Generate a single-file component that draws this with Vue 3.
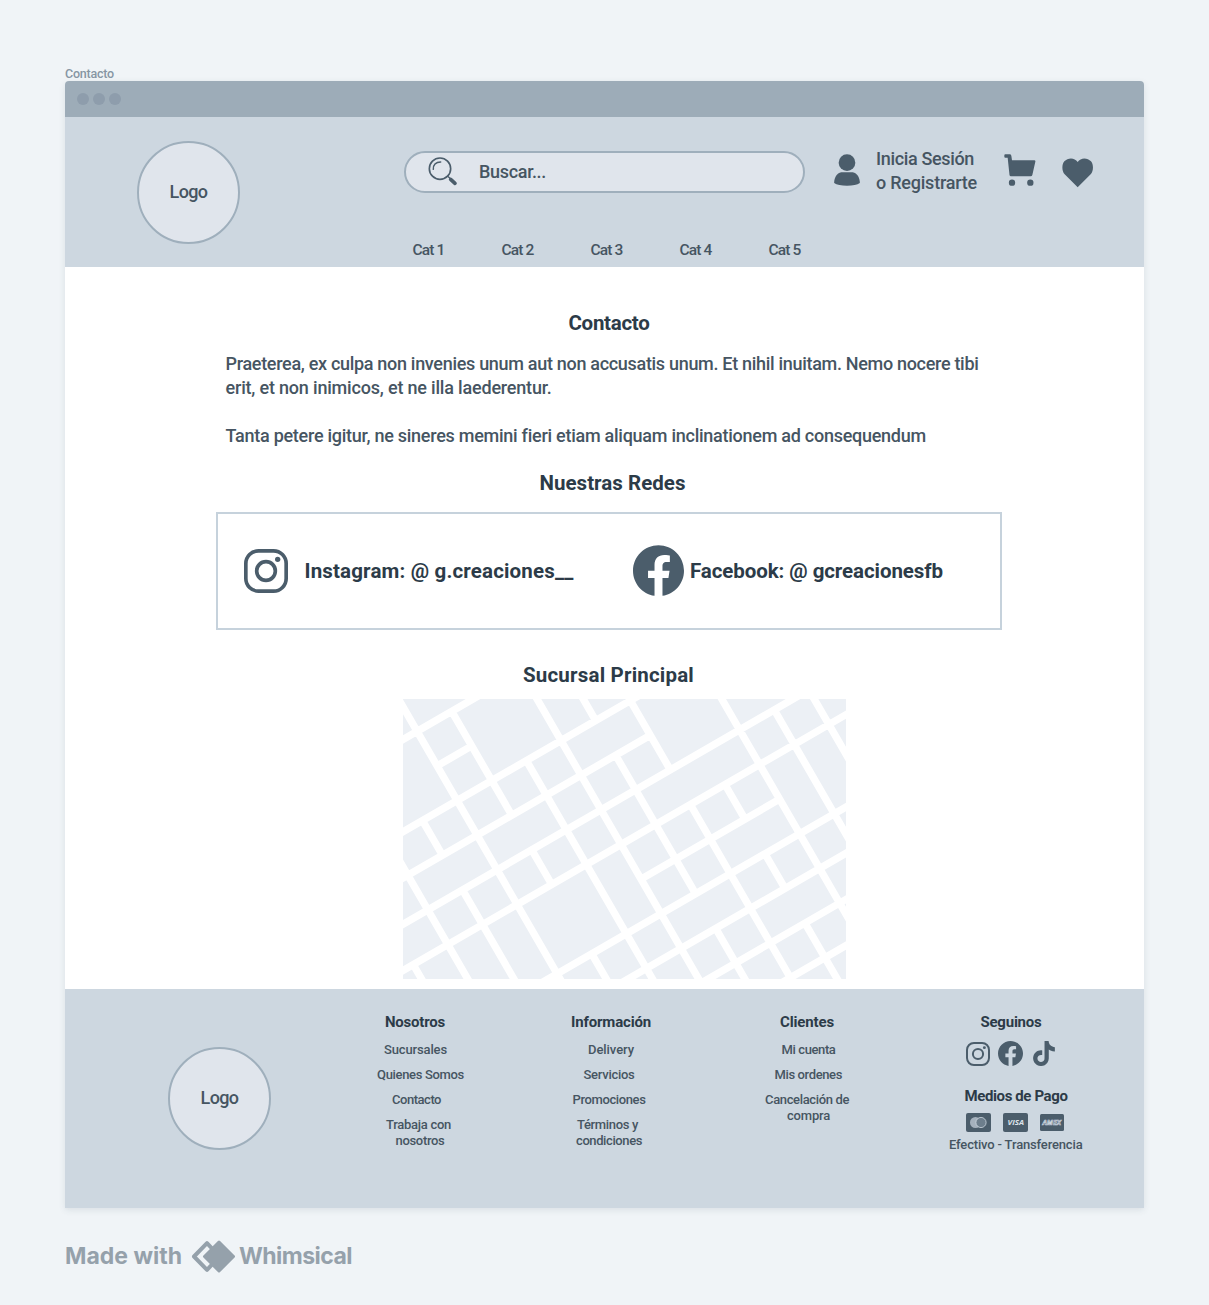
<script setup>
// Spreads the letters of a label evenly so that it fills the given width.
const vFit = {
  mounted(el, { value }) {
    const natural = el.getBoundingClientRect().width
    el.style.letterSpacing = `${(value - natural) / el.textContent.length}px`
  }
}

const categories = ['Cat 1', 'Cat 2', 'Cat 3', 'Cat 4', 'Cat 5']

const columns = [
  {
    title: 'Nosotros', x: 8, w: 60,
    links: [
      [{ t: 'Sucursales', x: 7, w: 63 }],
      [{ t: 'Quienes Somos', x: 0, w: 87 }],
      [{ t: 'Contacto', x: 15, w: 49 }],
      [{ t: 'Trabaja con', x: 9, w: 65 }, { t: 'nosotros', x: 18.5, w: 49 }]
    ]
  },
  {
    title: 'Información', x: 0, w: 80,
    links: [
      [{ t: 'Delivery', x: 17, w: 46 }],
      [{ t: 'Servicios', x: 12.5, w: 51 }],
      [{ t: 'Promociones', x: 1.5, w: 73 }],
      [{ t: 'Términos y', x: 6, w: 61 }, { t: 'condiciones', x: 5, w: 66 }]
    ]
  },
  {
    title: 'Clientes', x: 15, w: 54,
    links: [
      [{ t: 'Mi cuenta', x: 16.5, w: 54 }],
      [{ t: 'Mis ordenes', x: 9.5, w: 67.5 }],
      [{ t: 'Cancelación de', x: 0, w: 84 }, { t: 'compra', x: 22, w: 43 }]
    ]
  }
]

// Street grid: positions are multiples of one block, before rotation.
const S = 120
const far = 30
const streets = [
  [-far, 0, far], [0, 1, 1], [-far, 2, far], [-far, 3, 5], [-far, 4, far], [-far, 5, far],
  [3, 6, 7], [-far, 7, far], [-far, 8, far], [-far, 9, far], [-far, 10, far]
].map(([a, row, b]) => `M${a * S - 10} ${(row + 1) * S}H${b * S - 10}`)
const avenues = [
  [-3, 5, far], [-2, 2, far], [-1, 2, 3], [-1, 4, far], [0, -far, far], [1, 0, 3], [1, 4, 5], [1, 7, far],
  [2, 2, far], [3, -far, far], [4, -far, 2], [4, 3, 7], [4, 8, far], [5, -far, 4], [5, 5, far],
  [6, 5, 6], [6, 7, 8], [6, 9, far], [7, -far, far], [8, 4, far], [9, -far, far]
].map(([col, a, b]) => `M${col * S - 10} ${(a + 1) * S}V${(b + 1) * S}`)
const roads = [...streets, ...avenues].join('')
</script>

<template>
  <div class="page">
    <svg class="defs" width="0" height="0">
      <symbol id="ig" viewBox="0 0 132 132">
        <path d="M66 5.500C112 5.500 126.500 20 126.500 66S112 126.500 66 126.500 5.500 112 5.500 66 20 5.500 66 5.500z" fill="none" stroke="currentColor" stroke-width="0" />
        <rect x="5.500" y="5.500" width="121" height="121" rx="38" fill="none" stroke="currentColor" stroke-width="11" />
        <circle cx="66" cy="66" r="28" fill="none" stroke="currentColor" stroke-width="11" />
        <circle cx="101" cy="31" r="8" fill="currentColor" />
      </symbol>
      <symbol id="fb" viewBox="0 0 24 24">
        <path fill="currentColor" d="M24 12.073c0-6.627-5.373-12-12-12s-12 5.373-12 12c0 5.990 4.388 10.954 10.125 11.854v-8.385H7.078v-3.470h3.047V9.430c0-3.007 1.792-4.669 4.533-4.669 1.312 0 2.686.235 2.686.235v2.953H15.830c-1.491 0-1.956.925-1.956 1.874v2.250h3.328l-.532 3.470h-2.796v8.385C19.612 23.027 24 18.062 24 12.073z" />
      </symbol>
    </svg>

    <div class="frame-name"><span v-fit="49">Contacto</span></div>

    <div class="frame">
      <div class="titlebar"><i></i><i></i><i></i></div>

      <header class="header">
        <div class="logo"><span v-fit="38">Logo</span></div>
        <div class="center">
          <div class="search">
            <svg class="search-icon" viewBox="98 49 90 87" width="30" height="29">
              <g fill="none" stroke="currentColor">
                <circle cx="134" cy="84" r="32" stroke-width="5" />
                <path d="M114 86C113 73 121 64 136 64" stroke-width="4.500" stroke-linecap="round" />
                <path d="M156 106L164 113" stroke-width="4" />
                <path d="M166 116L179 128" stroke-width="11" stroke-linecap="round" />
              </g>
            </svg>
            <span v-fit="67">Buscar...</span>
          </div>
          <nav class="cats">
            <a v-for="c in categories" :key="c"><span v-fit="32">{{ c }}</span></a>
          </nav>
        </div>
        <div class="account">
          <svg class="user" viewBox="42 43 78 96" width="26" height="32">
            <circle cx="81" cy="69" r="25" fill="currentColor" />
            <path fill="currentColor" d="M64 98H98C112 100 120 116 119.500 130C112 136 98 138 81 138S50 136 42.500 130C42 116 50 100 64 98z" />
          </svg>
          <div class="signin">
            <div><span v-fit="98">Inicia Sesión</span></div>
            <div><span v-fit="101">o Registrarte</span></div>
          </div>
          <svg class="cart" viewBox="552 43 96 96" width="32" height="32">
            <path fill="currentColor" d="M556 44H569Q573 44 574 48L576 62H643Q647 62 646 66L637 106Q636 110 632 110H573Q569 110 568.500 106L563 54H556Q553 54 553 51V47Q553 44 556 44z" />
            <circle cx="576" cy="129" r="9.500" fill="currentColor" />
            <circle cx="631" cy="129" r="9.500" fill="currentColor" />
          </svg>
          <svg class="heart" viewBox="726 53 96 90" width="32" height="30">
            <path fill="currentColor" d="M773 141L734 102C725 92 725 72 733 63C744 51 764 51 773 65C782 51 802 51 813 63C821 72 821 92 812 102z" />
          </svg>
        </div>
      </header>

      <main class="main">
        <h2 class="h-contact"><span v-fit="81">Contacto</span></h2>
        <div class="copy">
          <div><span v-fit="753">Praeterea, ex culpa non invenies unum aut non accusatis unum. Et nihil inuitam. Nemo nocere tibi</span></div>
          <div><span v-fit="326">erit, et non inimicos, et ne illa laederentur.</span></div>
          <div class="gap"><span v-fit="700">Tanta petere igitur, ne sineres memini fieri etiam aliquam inclinationem ad consequendum</span></div>
        </div>
        <h2 class="h-social"><span v-fit="146">Nuestras Redes</span></h2>
        <div class="social">
          <svg class="ig" width="44" height="44"><use href="#ig" /></svg>
          <b class="ig-name"><span v-fit="269">Instagram: @ g.creaciones__</span></b>
          <svg class="fb" width="51" height="51"><use href="#fb" /></svg>
          <b class="fb-name"><span v-fit="253">Facebook: @ gcreacionesfb</span></b>
        </div>
        <h2 class="h-branch"><span v-fit="171">Sucursal Principal</span></h2>
        <svg class="map" viewBox="9 12 1329 840" width="443" height="280">
          <rect x="9" y="12" width="1329" height="840" fill="#ecf0f5" />
          <path :d="roads" transform="rotate(-30)" fill="none" stroke="#fff" stroke-width="22" />
        </svg>
      </main>

      <footer class="footer">
        <div class="logo"><span v-fit="38">Logo</span></div>
        <section v-for="col in columns" :key="col.title" class="col">
          <h3 :style="{ marginLeft: col.x + 'px' }"><span v-fit="col.w">{{ col.title }}</span></h3>
          <a v-for="(link, i) in col.links" :key="i">
            <div v-for="line in link" :key="line.t" :style="{ marginLeft: line.x + 'px' }">
              <span v-fit="line.w">{{ line.t }}</span>
            </div>
          </a>
        </section>
        <section class="follow">
          <h3 class="f-title"><span v-fit="61">Seguinos</span></h3>
          <div class="icons">
            <svg width="24" height="24"><use href="#ig" /></svg>
            <svg width="25" height="25"><use href="#fb" /></svg>
            <svg class="tiktok" viewBox="1.500 0 21 24" width="22" height="25">
              <path fill="currentColor" d="M12.525.02c1.310-.02 2.610-.01 3.910-.02.08 1.530.63 3.090 1.750 4.170 1.120 1.110 2.700 1.620 4.240 1.790v4.030c-1.440-.05-2.890-.35-4.200-.97-.57-.26-1.100-.59-1.620-.93-.01 2.920.01 5.840-.02 8.750-.08 1.400-.54 2.790-1.350 3.940-1.310 1.920-3.580 3.170-5.910 3.210-1.430.08-2.860-.31-4.080-1.030-2.020-1.190-3.440-3.370-3.650-5.710-.02-.5-.03-1-.01-1.490.18-1.900 1.120-3.720 2.580-4.960 1.660-1.440 3.980-2.130 6.150-1.720.02 1.480-.04 2.960-.04 4.440-.99-.32-2.150-.23-3.020.37-.63.41-1.110 1.040-1.360 1.750-.21.51-.15 1.070-.14 1.610.24 1.640 1.820 3.020 3.500 2.870 1.120-.01 2.190-.66 2.770-1.610.19-.33.4-.67.41-1.060.1-1.790.06-3.570.07-5.360.01-4.030-.01-8.050.02-12.070z" />
            </svg>
          </div>
          <h3 class="p-title"><span v-fit="103">Medios de Pago</span></h3>
          <div class="cards">
            <svg viewBox="0 0 25 19" width="25" height="19">
              <rect width="25" height="19" rx="2" fill="currentColor" />
              <circle cx="9.500" cy="9.500" r="5.500" fill="#a5b1bd" />
              <circle cx="15" cy="9.500" r="5.100" fill="#6d7e8c" stroke="#cdd7e0" stroke-width=".8" />
            </svg>
            <svg viewBox="0 0 25 19" width="25" height="19">
              <rect width="25" height="19" rx="2" fill="currentColor" />
              <text x="4.500" y="12.300" textLength="16.500" lengthAdjust="spacingAndGlyphs" class="brand">VISA</text>
            </svg>
            <svg viewBox="0 0 24 17" width="24" height="17">
              <rect width="24" height="17" rx="1.500" fill="currentColor" />
              <text x="2.500" y="10.800" textLength="18.500" lengthAdjust="spacingAndGlyphs" class="brand amex">AMEX</text>
            </svg>
          </div>
          <div class="pay"><span v-fit="133.500">Efectivo - Transferencia</span></div>
        </section>
      </footer>
    </div>

    <div class="made">
      <span v-fit="117">Made with</span>
      <svg viewBox="0 0 44 33" width="44" height="33">
        <path d="M16 3.200L28.500 16.500L16 29.800L3 16.500z" fill="none" stroke="#95a1ab" stroke-width="4" stroke-linejoin="round" />
        <path d="M28 2L42.500 16.500L28 31L13.500 16.500z" fill="#95a1ab" stroke="#95a1ab" stroke-width="3" stroke-linejoin="round" />
      </svg>
      <span v-fit="113">Whimsical</span>
    </div>
  </div>
</template>

<style>
body { margin: 0; background: #f0f4f7; }
</style>

<style scoped>
.page {
  box-sizing: border-box;
  width: 1209px;
  height: 1305px;
  padding: 66px 65px 0;
  background: #f0f4f7;
  font-family: Roboto, "Liberation Sans", sans-serif;
  font-weight: 500;
  color: #465562;
  overflow: hidden;
}
.defs { position: absolute; }
svg { display: block; flex: none; color: #4b5d6b; }
span { display: inline-block; white-space: nowrap; }
h2, h3 { margin: 0; color: #2c3b48; font-weight: 700; }
.frame-name { height: 15px; font-size: 12.500px; line-height: 15px; color: #8696a3; }
.frame {
  width: 1079px;
  height: 1127px;
  border-radius: 4px 4px 0 0;
  overflow: hidden;
  box-shadow: 0 2px 6px rgba(60, 80, 100, .12);
}
.titlebar { display: flex; align-items: center; gap: 4px; height: 36px; padding-left: 12px; background: #9dacb8; }
.titlebar i { width: 12px; height: 12px; border-radius: 50%; background: #8e9dac; }

.header { display: flex; align-items: flex-start; height: 150px; background: #cdd7e0; }
.logo {
  box-sizing: border-box;
  flex: none;
  width: 103px;
  height: 103px;
  display: flex;
  align-items: center;
  justify-content: center;
  padding-bottom: 2px;
  border: 2px solid #9fafbc;
  border-radius: 50%;
  background: #e0e5ec;
  font-size: 18px;
}
.header .logo { margin: 24px 0 0 72px; }
.center { margin: 34px 0 0 164px; width: 401px; }
.search {
  box-sizing: border-box;
  display: flex;
  align-items: center;
  height: 42px;
  padding-bottom: 2px;
  border: 2px solid #9fafbc;
  border-radius: 21px;
  background: #e0e5ec;
  font-size: 18px;
}
.search-icon { margin: 0 21px 0 22px; }
.cats { display: flex; margin: 46px 0 0 8.500px; font-size: 15.500px; line-height: 22px; }
.cats a { width: 89px; flex: none; }
.account { display: flex; align-items: flex-start; font-size: 18px; line-height: 24px; }
.user { margin: 37px 0 0 29px; }
.signin { width: 101px; margin: 30px 0 0 16px; }
.cart { margin: 37px 0 0 27px; }
.heart { margin: 41px 0 0 26px; }

.main { height: 722px; box-sizing: border-box; padding-top: 44px; background: #fff; }
.main h2, .social b { font-size: 20.500px; line-height: 24px; }
.h-contact { margin-left: 503.500px; }
.copy { margin: 17px 0 0 160.500px; font-size: 18px; line-height: 24px; }
.copy div { height: 24px; }
.copy .gap { margin-top: 24px; }
.main .h-social { margin: 23px 0 0 474.500px; }
.social {
  box-sizing: border-box;
  display: flex;
  align-items: center;
  width: 786px;
  height: 118px;
  margin: 17px 0 0 151px;
  border: 2px solid #c6d2dc;
  color: #2c3b48;
}
.ig { margin: 0 16.500px 1px 26px; }
.ig-name { width: 328.500px; }
.fb { margin: 0 6px 1px 0; }
.main .h-branch { margin: 33px 0 0 458px; }
.map { margin: 12px 0 0 338px; }

.footer { display: flex; align-items: flex-start; height: 219px; background: #cdd7e0; font-size: 13px; line-height: 16px; }
.footer .logo { margin: 58px 106px 0 103px; }
.footer h3 { font-size: 15px; line-height: 20px; }
.col { width: 194px; padding-top: 23px; flex: none; }
.col a { display: block; margin-bottom: 9px; }
.col h3 { margin-bottom: 10px; }
.col + .follow { margin-left: -10px; }
.follow { padding-top: 23px; }
.f-title { margin-left: 31.500px; }
.icons { display: flex; align-items: center; gap: 8px; height: 25px; margin: 9px 0 0 17px; }
.tiktok { margin-left: 2px; }
.p-title { margin: 20px 0 0 15.500px; }
.cards { display: flex; align-items: center; gap: 12px; margin: 7px 0 0 17px; }
.brand { font: italic 700 7.500px "Open Sans", sans-serif; fill: #dbe2e9; }
.amex { font-size: 6.500px; fill: none; stroke: #cdd7e0; stroke-width: .6; }
.pay { margin-top: 5px; }

.made { display: flex; align-items: center; margin-top: 32px; font: 700 23px/33px Inter, sans-serif; color: #95a1ab; }
.made svg { margin: 0 4px 0 9px; }
</style>
